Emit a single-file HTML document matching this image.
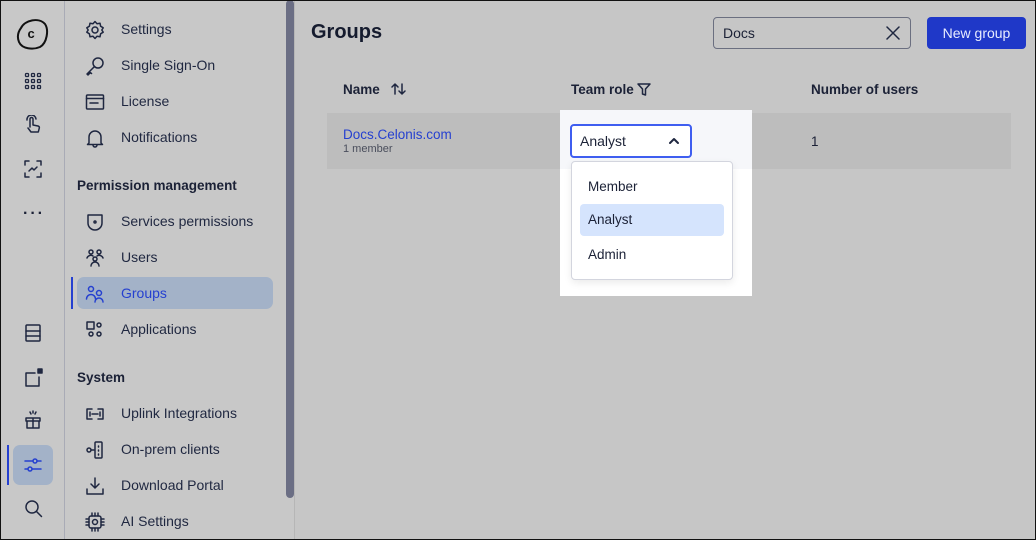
<!DOCTYPE html>
<html><head><style>
*{box-sizing:border-box;margin:0;padding:0}
body{width:1036px;height:540px;overflow:hidden;font-family:"Liberation Sans",sans-serif;background:#c6c6c6;position:relative;color:#1b2136}
.frame{position:absolute;inset:0;border:1px solid #111;z-index:10;pointer-events:none}
.rail{position:absolute;left:0;top:0;width:65px;height:540px;background:#c8c8c8;border-right:1px solid #a9abb6}
.nav{position:absolute;left:65px;top:0;width:230px;height:540px;background:#c8c8c8;border-right:1px solid #b6b6b6}
.scroll{position:absolute;left:286px;top:0;width:8px;height:498px;background:#6b6e84;border-radius:4px}
.item{position:absolute;left:12px;width:196px;height:32px;font-size:14px;line-height:32px;padding-left:44px;color:#1f2740}
.item svg{position:absolute;left:8px;top:7px}
.sec{position:absolute;left:12px;font-size:13.5px;font-weight:bold;color:#1b2136}
.ri{position:absolute;left:22px}
.main{position:absolute;left:295px;top:0;right:0;height:540px}
svg{fill:none;stroke:#1f2740;stroke-width:1.5;stroke-linecap:round;stroke-linejoin:round}
</style></head><body>
<div class="frame"></div>
<div class="rail">
 <svg class="ri" style="left:16px;top:16px" width="34" height="34" viewBox="0 0 34 34"><path d="M5 12C9 4 23 1 29 8c4 6 2 19-5 23-7 3-18 2-21-5-2-5-1-10 2-14z" stroke="#111" stroke-width="2"/><text x="11.5" y="22" font-size="13" font-weight="bold" fill="#111" stroke="none" font-family="Liberation Sans">c</text></svg>
 <svg class="ri" style="left:24px;top:72px" width="18" height="18" viewBox="0 0 18 18"><g stroke-width="1.3"><rect x="1.5" y="1.5" width="3" height="3" rx=".8"/><rect x="7.5" y="1.5" width="3" height="3" rx=".8"/><rect x="13.5" y="1.5" width="3" height="3" rx=".8"/><rect x="1.5" y="7.5" width="3" height="3" rx=".8"/><rect x="7.5" y="7.5" width="3" height="3" rx=".8"/><rect x="13.5" y="7.5" width="3" height="3" rx=".8"/><rect x="1.5" y="13.5" width="3" height="3" rx=".8"/><rect x="7.5" y="13.5" width="3" height="3" rx=".8"/><rect x="13.5" y="13.5" width="3" height="3" rx=".8"/></g></svg>
 <svg class="ri" style="left:24px;top:115px" width="18" height="20" viewBox="0 0 18 20"><path d="M6 12V4a1.5 1.5 0 013 0v6l5 1c1 .3 1.5 1 1.3 2l-1 4H7l-3-4"/><path d="M3 5a4 4 0 019-1"/></svg>
 <svg class="ri" style="left:24px;top:160px" width="18" height="18" viewBox="0 0 18 18"><path d="M1 5V1h4M13 1h4v4M17 13v4h-4M5 17H1v-4M5 11l3-3 2 2 3-3"/></svg>
 <div style="position:absolute;left:23px;top:205px;font-size:16px;letter-spacing:2px;font-weight:bold">···</div>
 <svg class="ri" style="left:25px;top:324px" width="16" height="18" viewBox="0 0 16 18"><rect x="1" y="1" width="14" height="16" rx="1"/><path d="M1 7h14M1 12h14"/></svg>
 <svg class="ri" style="left:24px;top:368px" width="20" height="20" viewBox="0 0 20 20"><path d="M11 5H2v13h13V9"/><rect x="14" y="1" width="4" height="4" fill="#1f2740"/></svg>
 <svg class="ri" style="left:24px;top:410px" width="18" height="20" viewBox="0 0 18 20"><path d="M2 8h14v3H2zM3 11v7h12v-7M9 8v10M6 2l1 2M9 1v2M12 2l-1 2"/></svg>
 <div style="position:absolute;left:7px;top:445px;width:2px;height:40px;background:#2540d0"></div>
 <div style="position:absolute;left:13px;top:445px;width:40px;height:40px;background:#a3b2c8;border-radius:7px"></div>
 <svg class="ri" style="left:24px;top:456px" width="18" height="18" viewBox="0 0 18 18" ><g stroke="#2540d0"><path d="M1 5h8M13 5h4M1 13h3M8 13h9"/><circle cx="11" cy="5" r="2"/><circle cx="6" cy="13" r="2"/></g></svg>
 <svg class="ri" style="left:24px;top:499px" width="20" height="20" viewBox="0 0 20 20"><circle cx="8" cy="8" r="6"/><path d="M12.5 12.5l5 5"/></svg>
</div>
<div class="nav">
 <div class="item" style="top:13px"><svg width="20" height="20" viewBox="0 0 20 20"><circle cx="10" cy="10" r="3"/><path d="M10 1.5l2 2.2 3-.5.6 3 2.6 1.6-1.4 2.2 1.4 2.2-2.6 1.6-.6 3-3-.5-2 2.2-2-2.2-3 .5-.6-3L1.8 12.2 3.2 10 1.8 7.8l2.6-1.6.6-3 3 .5z"/></svg>Settings</div>
 <div class="item" style="top:49px"><svg width="20" height="20" viewBox="0 0 20 20"><circle cx="13" cy="7" r="5"/><path d="M9.5 10.5L2 18l1 1 2-2M4.5 16l2 1.5"/></svg>Single Sign-On</div>
 <div class="item" style="top:85px"><svg width="20" height="20" viewBox="0 0 20 20"><rect x="1.5" y="3" width="17" height="14" rx="1"/><path d="M1.5 6.5h17M5 11h8"/></svg>License</div>
 <div class="item" style="top:121px"><svg width="20" height="20" viewBox="0 0 20 20"><path d="M4 15V9a6 6 0 0112 0v6l1.5 1.5h-15zM8 17a2 2 0 004 0"/></svg>Notifications</div>
 <div class="sec" style="top:178px">Permission management</div>
 <div class="item" style="top:205px"><svg width="20" height="20" viewBox="0 0 20 20"><path d="M3 3h14v8a7 7 0 01-14 0z"/><circle cx="10" cy="10" r="1"/></svg>Services permissions</div>
 <div class="item" style="top:241px"><svg width="20" height="20" viewBox="0 0 20 20"><circle cx="6" cy="4" r="2"/><circle cx="14" cy="4" r="2"/><circle cx="10" cy="11" r="2"/><path d="M2 10a4 4 0 016-2M18 10a4 4 0 00-6-2M6 18a4 4 0 018 0"/></svg>Users</div>
 <div style="position:absolute;left:6px;top:277px;width:2px;height:32px;background:#2540d0"></div>
 <div class="item" style="top:277px;background:#a3b2c8;border-radius:7px;color:#2540d0"><svg width="20" height="20" viewBox="0 0 20 20"><g stroke="#2540d0"><circle cx="6" cy="5" r="2.5"/><circle cx="14" cy="9" r="2.5"/><path d="M1.5 15a4.5 4.5 0 019 0M10 18a4 4 0 018 0"/></g></svg>Groups</div>
 <div class="item" style="top:313px"><svg width="20" height="20" viewBox="0 0 20 20"><rect x="2" y="2" width="7" height="7"/><circle cx="14" cy="5" r="2"/><circle cx="6" cy="14" r="2"/><circle cx="14" cy="14" r="2"/></svg>Applications</div>
 <div class="sec" style="top:370px">System</div>
 <div class="item" style="top:397px"><svg width="20" height="20" viewBox="0 0 20 20"><path d="M7 5H2v10h5M13 5h5v10h-5M7 10h6M5 8v4M15 8v4"/></svg>Uplink Integrations</div>
 <div class="item" style="top:433px"><svg width="20" height="20" viewBox="0 0 20 20"><circle cx="4" cy="10" r="2"/><path d="M6 10h3"/><rect x="10" y="2" width="7" height="16" rx="1"/><path d="M13.5 6v1M13.5 10v1M13.5 14v1"/></svg>On-prem clients</div>
 <div class="item" style="top:469px"><svg width="20" height="20" viewBox="0 0 20 20"><path d="M10 2v10M6 8l4 4 4-4M2 13v5h16v-5"/></svg>Download Portal</div>
 <div class="item" style="top:505px"><svg width="20" height="20" viewBox="0 0 20 20"><rect x="4" y="4" width="12" height="12" rx="2"/><circle cx="10" cy="10" r="2.5"/><path d="M7 1v3M10 1v3M13 1v3M7 16v3M10 16v3M13 16v3M1 7h3M1 10h3M1 13h3M16 7h3M16 10h3M16 13h3"/></svg>AI Settings</div>
</div>
<div class="scroll"></div>
<div class="main">
 <div style="position:absolute;left:16px;top:21px;font-size:20px;font-weight:bold;color:#151b2e">Groups</div>
 <div style="position:absolute;left:418px;top:17px;width:198px;height:32px;border:1px solid #6b6f80;border-radius:4px;font-size:14px;line-height:30px;padding-left:9px">Docs
  <svg style="position:absolute;right:10px;top:8px" width="14" height="14" viewBox="0 0 14 14"><path d="M1 1l12 12M13 1L1 13"/></svg></div>
 <div style="position:absolute;left:632px;top:17px;width:99px;height:32px;background:#1f38c8;border-radius:4px;color:#e8ecff;font-size:14px;line-height:32px;text-align:center">New group</div>
 <div style="position:absolute;left:48px;top:82px;font-size:13.5px;font-weight:bold">Name</div>
 <svg style="position:absolute;left:96px;top:82px" width="16" height="14" viewBox="0 0 16 14"><path d="M4 12V2M1 5l3-3 3 3M11 2v10M8 9l3 3 3-3"/></svg>
 <div style="position:absolute;left:276px;top:82px;font-size:13.5px;font-weight:bold">Team role</div>
 <svg style="position:absolute;left:342px;top:83px" width="14" height="13" viewBox="0 0 14 13"><path d="M1 1h12L8.5 6v6L5.5 11V6z"/></svg>
 <div style="position:absolute;left:516px;top:82px;font-size:13.5px;font-weight:bold">Number of users</div>
 <div style="position:absolute;left:32px;top:113px;width:684px;height:56px;background:#bdbdbd"></div>
 <div style="position:absolute;left:48px;top:127px;font-size:13.5px;color:#2540d0">Docs.Celonis.com</div>
 <div style="position:absolute;left:48px;top:143px;font-size:11px;color:#4a4e5c">1 member</div>
 <div style="position:absolute;left:516px;top:134px;font-size:13.5px">1</div>
</div>
<div style="position:absolute;left:560px;top:110px;width:192px;height:186px;background:#fff">
 <div style="position:absolute;left:0;top:0;width:192px;height:59px;background:#f6f7fa"></div>
 <div style="position:absolute;left:10px;top:14px;width:122px;height:34px;border:2px solid #3f5ef0;border-radius:4px;background:#fff;font-size:14px;line-height:30px;padding-left:8px">Analyst
  <svg style="position:absolute;right:10px;top:11px" width="12" height="8" viewBox="0 0 12 8"><path d="M2 6l4-4 4 4" stroke-width="2"/></svg></div>
 <div style="position:absolute;left:11px;top:51px;width:162px;height:119px;border:1px solid #d3d5de;border-radius:4px;background:#fff;box-shadow:0 3px 8px rgba(0,0,0,.08)">
  <div style="position:absolute;left:16px;top:17px;font-size:13.5px">Member</div>
  <div style="position:absolute;left:8px;top:42px;width:144px;height:32px;background:#d5e4fd;border-radius:4px;font-size:13.5px;line-height:32px;padding-left:8px">Analyst</div>
  <div style="position:absolute;left:16px;top:85px;font-size:13.5px">Admin</div>
 </div>
</div>
</body></html>
